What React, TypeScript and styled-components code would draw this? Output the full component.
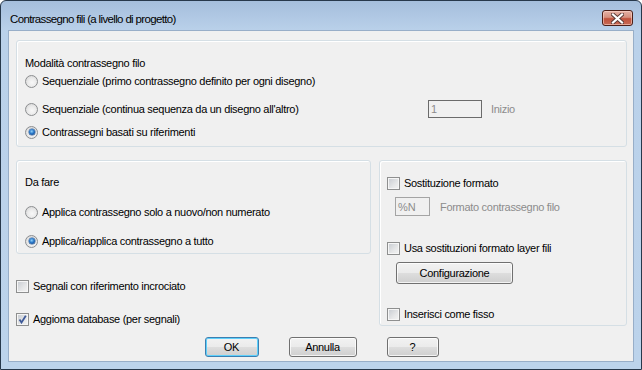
import styled, { createGlobalStyle } from "styled-components";

const GlobalStyle = createGlobalStyle`
  html, body {
    margin: 0;
    padding: 0;
    background: #ffffff;
  }
  body {
    font-family: "Liberation Sans", Arial, sans-serif;
    font-size: 11px;
    color: #000000;
  }
`;

const Window = styled.div`
  width: 642px;
  height: 370px;
  box-sizing: border-box;
  border: 1px solid #27384b;
  border-radius: 6px 6px 0 0;
  background: linear-gradient(#a5bedc 0px, #bad1ea 30px, #bcd3eb 100%);
  padding: 0 7px 7px 7px;
  display: flex;
  flex-direction: column;
`;

const TitleBar = styled.div`
  height: 29px;
  display: flex;
  align-items: flex-start;
  justify-content: space-between;
`;

const TitleText = styled.span`
  font-family: "Liberation Sans", Arial, sans-serif;
  font-size: 11.5px;
  letter-spacing: -0.65px;
  line-height: 14px;
  margin: 11px 0 0 2px;
  color: #000000;
`;

const CloseButton = styled.div`
  width: 31px;
  height: 16px;
  margin: 9px 1px 0 0;
  box-sizing: border-box;
  border: 1px solid #4b1f18;
  border-radius: 3px;
  background: linear-gradient(#e5b2a6 0%, #d6907f 45%, #c0523c 55%, #c76a55 100%);
  box-shadow: inset 0 0 0 1px rgba(255, 220, 210, 0.55);
  display: flex;
  align-items: center;
  justify-content: center;
`;

const Client = styled.div`
  flex: 1;
  background: #f0f0f0;
  border: 1px solid #98aec8;
  padding: 9px 6px 0 7px;
  display: flex;
  flex-direction: column;
`;

const Group = styled.div<{ $h: number; $w?: number; $pt: number; $pl: number }>`
  box-sizing: border-box;
  height: ${(p) => p.$h}px;
  ${(p) => (p.$w ? `width: ${p.$w}px;` : "")}
  border: 1px solid #d5dfe5;
  border-radius: 3px;
  box-shadow: inset 1px 1px 0 #ffffff;
  padding: ${(p) => p.$pt}px 0 0 ${(p) => p.$pl}px;
  display: flex;
  flex-direction: column;
`;

const Row = styled.div<{ $mt?: number; $ml?: number; $h?: number }>`
  display: flex;
  align-items: center;
  height: ${(p) => p.$h ?? 18}px;
  margin-top: ${(p) => p.$mt ?? 0}px;
  margin-left: ${(p) => p.$ml ?? 0}px;
  white-space: nowrap;
`;

const Label = styled.span<{ $w?: number; $muted?: boolean; $ml?: number }>`
  ${(p) => (p.$w ? `width: ${p.$w}px;` : "")}
  margin-left: ${(p) => p.$ml ?? 0}px;
  color: ${(p) => (p.$muted ? "#8c8c8c" : "#000000")};
  letter-spacing: -0.3px;
`;

const RadioCircle = styled.span<{ $checked?: boolean }>`
  position: relative;
  flex: none;
  width: 13px;
  height: 13px;
  box-sizing: border-box;
  border-radius: 50%;
  border: 1px solid #8c8e90;
  background: radial-gradient(circle at 55% 60%, #f8f8f8 0%, #ebebeb 45%, #cfcfcf 100%);
  margin-right: 4px;
  &::after {
    content: "";
    position: absolute;
    inset: 2.5px;
    border-radius: 50%;
    display: ${(p) => (p.$checked ? "block" : "none")};
    background: radial-gradient(circle at 45% 40%, #8fd0f8 0%, #2a78c8 45%, #0d3b80 90%);
    box-shadow: 0 0 0 0.5px #2f5d96;
  }
`;

const CheckBox = styled.span`
  flex: none;
  width: 13px;
  height: 13px;
  box-sizing: border-box;
  border: 1px solid #8e8f8f;
  background: linear-gradient(135deg, #c6cad0 0%, #e6e7e8 60%, #f4f4f4 100%);
  box-shadow: inset 0 0 0 1px #f6f6f6;
  margin-right: 4px;
  display: flex;
  align-items: center;
  justify-content: center;
`;

const TextField = styled.div<{ $w: number; $h: number; $dark?: boolean }>`
  flex: none;
  box-sizing: border-box;
  width: ${(p) => p.$w}px;
  height: ${(p) => p.$h}px;
  border: 1px solid ${(p) => (p.$dark ? "#6b6b6b" : "#a4a4a4")};
  background: #f0f0f0;
  color: #8c8c8c;
  padding: 0 2px;
  display: flex;
  align-items: center;
`;

const Middle = styled.div`
  display: flex;
  gap: 8px;
  margin-top: 13px;
`;

const LeftColumn = styled.div`
  width: 355px;
  display: flex;
  flex-direction: column;
`;

const Button = styled.button<{ $w: number; $h?: number; $default?: boolean }>`
  flex: none;
  box-sizing: border-box;
  width: ${(p) => p.$w}px;
  height: ${(p) => p.$h ?? 20}px;
  padding: 0;
  border: 1px solid ${(p) => (p.$default ? "#3c7fb1" : "#707070")};
  border-radius: 3px;
  background: linear-gradient(#f2f2f2 0%, #ebebeb 48%, #dddddd 52%, #cfcfcf 100%);
  box-shadow: inset 0 0 0 1px ${(p) => (p.$default ? "#5ed0fb" : "rgba(255,255,255,0.75)")};
  font-family: "Liberation Sans", Arial, sans-serif;
  font-size: 11px;
  letter-spacing: -0.3px;
  color: #000000;
`;

const ButtonRow = styled.div`
  display: flex;
  justify-content: center;
  gap: 30px;
  margin-top: 9px;
`;

function Radio({ checked, children, w }: { checked?: boolean; children: string; w?: number }) {
  return (
    <>
      <RadioCircle $checked={checked} />
      <Label $w={w}>{children}</Label>
    </>
  );
}

function Check({ checked, children }: { checked?: boolean; children: string }) {
  return (
    <>
      <CheckBox>
        {checked && (
          <svg width="9" height="9" viewBox="0 0 9 9">
            <path d="M1.5 4.5 L3.5 7.5 L7.8 0.8" fill="none" stroke="#3f5a99" strokeWidth="1.8" />
          </svg>
        )}
      </CheckBox>
      <Label>{children}</Label>
    </>
  );
}

export default function App() {
  return (
    <>
      <GlobalStyle />
      <Window>
        <TitleBar>
          <TitleText>Contrassegno fili (a livello di progetto)</TitleText>
          <CloseButton>
            <svg width="13" height="11" viewBox="0 0 13 11">
              <path d="M2 1.5 L11 9.5 M11 1.5 L2 9.5" stroke="#5a3a36" strokeWidth="4" strokeLinecap="square" />
              <path d="M2 1.5 L11 9.5 M11 1.5 L2 9.5" stroke="#ffffff" strokeWidth="2.2" strokeLinecap="square" />
            </svg>
          </CloseButton>
        </TitleBar>
        <Client>
          <Group $h={107} $pt={13} $pl={8}>
            <Row>
              <Label>Modalità contrassegno filo</Label>
            </Row>
            <Row>
              <Radio>Sequenziale (primo contrassegno definito per ogni disegno)</Radio>
            </Row>
            <Row $mt={10}>
              <Radio w={386}>Sequenziale (continua sequenza da un disegno all'altro)</Radio>
              <TextField $w={54} $h={18} $dark>1</TextField>
              <Label $muted $ml={9}>Inizio</Label>
            </Row>
            <Row $mt={5}>
              <Radio checked>Contrassegni basati su riferimenti</Radio>
            </Row>
          </Group>

          <Middle>
            <LeftColumn>
              <Group $h={94} $pt={12} $pl={8}>
                <Row>
                  <Label>Da fare</Label>
                </Row>
                <Row $mt={12}>
                  <Radio>Applica contrassegno solo a nuovo/non numerato</Radio>
                </Row>
                <Row $mt={11}>
                  <Radio checked>Applica/riapplica contrassegno a tutto</Radio>
                </Row>
              </Group>
              <Row $mt={23}>
                <Check>Segnali con riferimento incrociato</Check>
              </Row>
              <Row $mt={15}>
                <Check checked>Aggioma database (per segnali)</Check>
              </Row>
            </LeftColumn>

            <Group $h={166} $w={248} $pt={13} $pl={7}>
              <Row>
                <Check>Sostituzione formato</Check>
              </Row>
              <Row $mt={5} $ml={8} $h={19}>
                <TextField $w={35} $h={19}>
                  %N
                </TextField>
                <Label $muted $ml={10}>
                  Formato contrassegno filo
                </Label>
              </Row>
              <Row $mt={23}>
                <Check>Usa sostituzioni formato layer fili</Check>
              </Row>
              <Row $mt={5} $ml={9} $h={22}>
                <Button $w={117} $h={22}>
                  Configurazione
                </Button>
              </Row>
              <Row $mt={21}>
                <Check>Inserisci come fisso</Check>
              </Row>
            </Group>
          </Middle>

          <ButtonRow>
            <Button $w={54} $default>
              OK
            </Button>
            <Button $w={68}>Annulla</Button>
            <Button $w={52}>?</Button>
          </ButtonRow>
        </Client>
      </Window>
    </>
  );
}
